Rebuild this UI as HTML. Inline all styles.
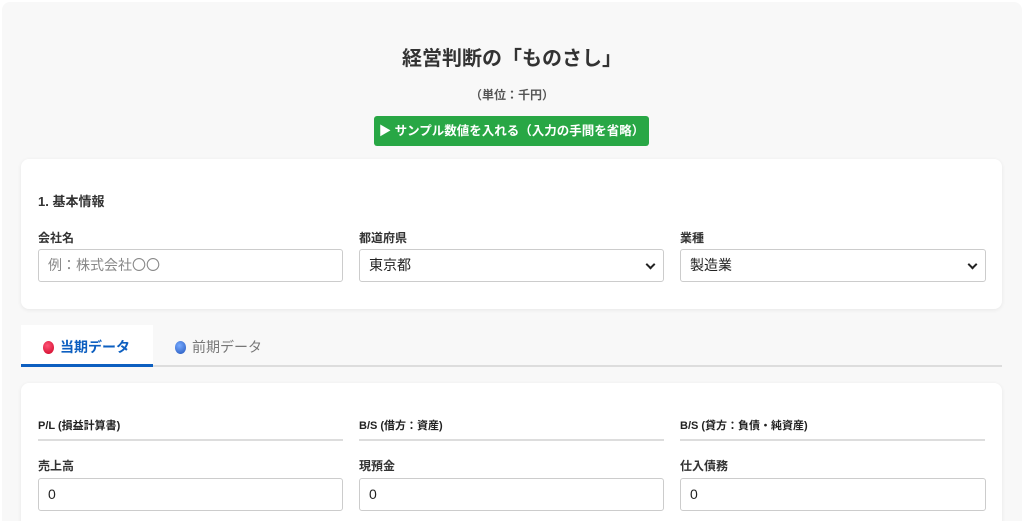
<!DOCTYPE html>
<html><head><meta charset="utf-8"><style>
*{box-sizing:border-box;margin:0;padding:0}
html,body{width:1024px;height:521px;overflow:hidden}
body{background:#fff;font-family:"Liberation Sans","Noto Sans CJK JP",sans-serif;color:#333;position:relative}
.wrap{position:absolute;left:2px;top:2px;width:1020px;height:519px;background:#f8f8f8;border-radius:8px 8px 0 0;overflow:hidden}
.abs{position:absolute}
h1{position:absolute;left:0;width:1020px;top:40px;text-align:center;font-size:20px;font-weight:bold;color:#333}
.unit{position:absolute;left:0;width:1020px;top:84px;text-align:center;font-size:12px;font-weight:bold;color:#555}
.btn{position:absolute;left:372px;top:114px;width:275px;height:30px;background:#28a745;border-radius:3px;color:#fff;font-size:12.5px;font-weight:bold;line-height:30px;text-align:center;white-space:nowrap}
.card{position:absolute;left:19px;width:981px;background:#fff;border-radius:8px;box-shadow:0 1px 4px rgba(0,0,0,.07)}
.lbl{position:absolute;font-size:12px;font-weight:bold;color:#333}
.inp{position:absolute;height:33px;border:1px solid #ccc;border-radius:3px;background:#fff;font-size:14px;line-height:31px;padding-left:9px;color:#222}
.sel:after{content:"";position:absolute;right:9px;top:11px;width:5px;height:5px;border-right:2px solid #222;border-bottom:2px solid #222;transform:rotate(45deg)}
.sh{position:absolute;font-size:11px;font-weight:bold;width:305px;border-bottom:2px solid #ddd;padding-bottom:6px;color:#222}
.dot{display:inline-block;width:11px;height:13px;border-radius:50%;vertical-align:-2px;margin-right:6px}
</style></head><body>
<div class="wrap">
<h1>経営判断の「ものさし」</h1>
<div class="unit">（単位：千円）</div>
<div class="btn">▶ サンプル数値を入れる（入力の手間を省略）</div>
<div class="card" style="top:157px;height:150px">
 <div class="lbl" style="left:17px;top:32px;font-size:13px">1. 基本情報</div>
 <div class="lbl" style="left:17px;top:70px">会社名</div>
 <div class="lbl" style="left:338px;top:70px">都道府県</div>
 <div class="lbl" style="left:659px;top:70px">業種</div>
 <div class="inp" style="left:17px;top:90px;width:305px;color:#888">例：株式会社〇〇</div>
 <div class="inp sel" style="left:338px;top:90px;width:305px">東京都</div>
 <div class="inp sel" style="left:659px;top:90px;width:306px">製造業</div>
</div>
<div class="abs" style="left:19px;top:323px;width:132px;height:42px;background:#fff"></div>
<div class="abs" style="left:19px;top:363px;width:981px;height:2px;background:#ddd"></div>
<div class="abs" style="left:19px;top:362px;width:132px;height:3px;background:#0d5fc0"></div>
<div class="abs" style="left:41px;top:335px;font-size:14px;font-weight:bold;color:#0d5fc0"><span class="dot" style="background:radial-gradient(circle at 40% 35%,#f57,#c02)"></span>当期データ</div>
<div class="abs" style="left:173px;top:335px;font-size:14px;color:#777"><span class="dot" style="background:radial-gradient(circle at 40% 35%,#7af,#25b)"></span>前期データ</div>
<div class="card" style="top:381px;height:160px">
 <div class="sh" style="left:17px;top:34px">P/L (損益計算書)</div>
 <div class="sh" style="left:338px;top:34px">B/S (借方：資産)</div>
 <div class="sh" style="left:659px;top:34px">B/S (貸方：負債・純資産)</div>
 <div class="lbl" style="left:17px;top:74px">売上高</div>
 <div class="lbl" style="left:338px;top:74px">現預金</div>
 <div class="lbl" style="left:659px;top:74px">仕入債務</div>
 <div class="inp" style="left:17px;top:95px;width:305px">0</div>
 <div class="inp" style="left:338px;top:95px;width:305px">0</div>
 <div class="inp" style="left:659px;top:95px;width:306px">0</div>
</div>
</div>
</body></html>
